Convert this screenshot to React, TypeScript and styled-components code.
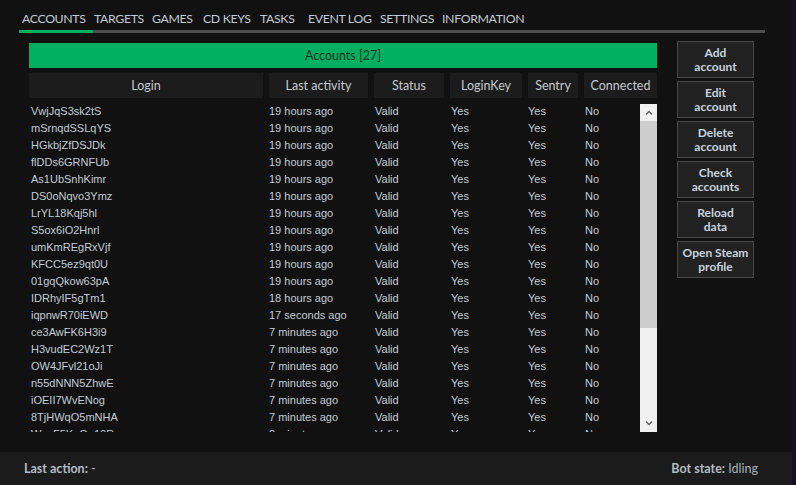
import React from "react";
import styled, { createGlobalStyle } from "styled-components";

const GlobalStyle = createGlobalStyle`
  html, body { margin: 0; padding: 0; background: #111111; }
  body { width: 796px; height: 485px; overflow: hidden; }
`;

const UI = `"Lato", "Open Sans", "Noto Sans", sans-serif`;
const DATA = `"Liberation Sans", Arial, sans-serif`;

const Screen = styled.div`
  display: flex;
  width: 796px;
  height: 485px;
`;

const Window = styled.div`
  width: 792px;
  display: flex;
  flex-direction: column;
  background: #111111;
`;

const Edge = styled.div`
  width: 4px;
  background: #1c0b2c;
`;

const TabBar = styled.div`
  display: flex;
  margin-left: 19px;
  width: 746px;
  height: 30px;
  border-bottom: 3px solid #4e4e4e;
`;

const Tab = styled.div<{ $active?: boolean; $w?: number }>`
  position: relative;
  width: ${(p) => (p.$w ? `${p.$w}px` : "auto")};
  box-sizing: border-box;
  padding: 7px 0 0 3px;
  line-height: 23px;
  font-family: ${UI};
  font-size: 12.3px;
  letter-spacing: -0.35px;
  color: #c4cad1;
  white-space: nowrap;
  &::after {
    content: "";
    display: ${(p) => (p.$active ? "block" : "none")};
    position: absolute;
    left: 0;
    right: -2px;
    bottom: -3px;
    height: 3px;
    background: #00b060;
  }
`;

const Body = styled.div`
  flex: 1;
  display: flex;
  padding: 8px 0 0 29px;
  gap: 20px;
  min-height: 0;
`;

const TablePanel = styled.div`
  width: 628px;
  display: flex;
  flex-direction: column;
  padding-top: 2px;
`;

const TitleBar = styled.div`
  height: 25px;
  background: #00b060;
  color: #1a3324;
  font-family: ${UI};
  font-size: 12.5px;
  line-height: 25px;
  text-align: center;
`;

const COLS = "234px 99px 70px 72px 50px 73px";

const HeaderRow = styled.div`
  display: grid;
  grid-template-columns: ${COLS};
  column-gap: 6px;
  margin-top: 5px;
  height: 25px;
`;

const HeaderCell = styled.div`
  background: #1c1c1c;
  color: #c6c9cc;
  font-family: ${UI};
  font-size: 12.5px;
  line-height: 25px;
  text-align: center;
  white-space: nowrap;
`;

const List = styled.div`
  margin-top: 5px;
  height: 329px;
  display: flex;
`;

const Rows = styled.div`
  flex: 1;
  overflow: hidden;
`;

const Row = styled.div`
  display: grid;
  grid-template-columns: 240px 105px 76px 78px 56px 1fr;
  height: 17px;
  line-height: 17px;
  font-family: ${DATA};
  font-size: 11px;
  color: #c5ccd5;
  white-space: nowrap;
`;

const Cell = styled.div<{ $pad?: number }>`
  padding-left: ${(p) => p.$pad ?? 1}px;
`;

const Scrollbar = styled.div`
  width: 17px;
  margin-top: 1px;
  background: #f0f0f0;
  display: flex;
  flex-direction: column;
`;

const ArrowBox = styled.div`
  height: 17px;
  display: flex;
  align-items: center;
  justify-content: center;
  background: #f0f0f0;
`;

const Thumb = styled.div`
  height: 207px;
  background: #cdcdcd;
`;

const Track = styled.div`
  flex: 1;
`;

const Buttons = styled.div`
  width: 77px;
  display: flex;
  flex-direction: column;
  gap: 3px;
`;

const ActionButton = styled.div`
  height: 37px;
  box-sizing: border-box;
  border: 1px solid #474747;
  background: #222222;
  color: #c8d3de;
  font-family: ${UI};
  font-weight: 700;
  font-size: 12px;
  display: flex;
  flex-direction: column;
  align-items: center;
  justify-content: center;
  text-align: center;
`;

const ButtonLine = styled.span`
  display: block;
  height: 14px;
  line-height: 14px;
  white-space: nowrap;
`;

const StatusBar = styled.div`
  height: 33px;
  background: #1b1b1b;
  display: flex;
  align-items: center;
  justify-content: space-between;
  padding: 0 34px 0 24px;
  font-family: ${UI};
  font-size: 12.5px;
  color: #b5bcc3;
`;

const Label = styled.span`
  font-weight: 700;
`;

const Value = styled.span`
  color: #a9b1b9;
`;

const Chevron = ({ up }: { up?: boolean }) => (
  <svg width="8" height="5" viewBox="0 0 8 5">
    <polyline
      points={up ? "1,4.5 4,1.5 7,4.5" : "1,0.5 4,3.5 7,0.5"}
      fill="none"
      stroke="#606060"
      strokeWidth="1.4"
    />
  </svg>
);

const tabs = [
  { t: "ACCOUNTS", w: 72 },
  { t: "TARGETS", w: 58 },
  { t: "GAMES", w: 51 },
  { t: "CD KEYS", w: 57 },
  { t: "TASKS", w: 48 },
  { t: "EVENT LOG", w: 72 },
  { t: "SETTINGS", w: 62 },
  { t: "INFORMATION" },
];

const accounts: [string, string][] = [
  ["VwjJqS3sk2tS", "19 hours ago"],
  ["mSrnqdSSLqYS", "19 hours ago"],
  ["HGkbjZfDSJDk", "19 hours ago"],
  ["flDDs6GRNFUb", "19 hours ago"],
  ["As1UbSnhKimr", "19 hours ago"],
  ["DS0oNqvo3Ymz", "19 hours ago"],
  ["LrYL18Kqj5hl", "19 hours ago"],
  ["S5ox6iO2Hnrl", "19 hours ago"],
  ["umKmREgRxVjf", "19 hours ago"],
  ["KFCC5ez9qt0U", "19 hours ago"],
  ["01gqQkow63pA", "19 hours ago"],
  ["IDRhyIF5gTm1", "18 hours ago"],
  ["iqpnwR70iEWD", "17 seconds ago"],
  ["ce3AwFK6H3i9", "7 minutes ago"],
  ["H3vudEC2Wz1T", "7 minutes ago"],
  ["OW4JFvl21oJi", "7 minutes ago"],
  ["n55dNNN5ZhwE", "7 minutes ago"],
  ["iOEII7WvENog", "7 minutes ago"],
  ["8TjHWqO5mNHA", "7 minutes ago"],
  ["WzoF5KuGo10R", "8 minutes ago"],
];

const buttons = [
  ["Add", "account"],
  ["Edit", "account"],
  ["Delete", "account"],
  ["Check", "accounts"],
  ["Reload", "data"],
  ["Open Steam", "profile"],
];

export default function App() {
  return (
    <>
      <GlobalStyle />
      <Screen>
        <Window>
          <TabBar>
            {tabs.map((tab, i) => (
              <Tab key={tab.t} $active={i === 0} $w={tab.w}>
                {tab.t}
              </Tab>
            ))}
          </TabBar>
          <Body>
            <TablePanel>
              <TitleBar>Accounts [27]</TitleBar>
              <HeaderRow>
                {["Login", "Last activity", "Status", "LoginKey", "Sentry", "Connected"].map((h) => (
                  <HeaderCell key={h}>{h}</HeaderCell>
                ))}
              </HeaderRow>
              <List>
                <Rows>
                  {accounts.map(([login, last]) => (
                    <Row key={login}>
                      <Cell $pad={2}>{login}</Cell>
                      <Cell $pad={0}>{last}</Cell>
                      <Cell>Valid</Cell>
                      <Cell>Yes</Cell>
                      <Cell $pad={0}>Yes</Cell>
                      <Cell>No</Cell>
                    </Row>
                  ))}
                </Rows>
                <Scrollbar>
                  <ArrowBox>
                    <Chevron up />
                  </ArrowBox>
                  <Thumb />
                  <Track />
                  <ArrowBox>
                    <Chevron />
                  </ArrowBox>
                </Scrollbar>
              </List>
            </TablePanel>
            <Buttons>
              {buttons.map(([a, b]) => (
                <ActionButton key={a}>
                  <ButtonLine>{a}</ButtonLine>
                  <ButtonLine>{b}</ButtonLine>
                </ActionButton>
              ))}
            </Buttons>
          </Body>
          <StatusBar>
            <span>
              <Label>Last action:</Label> -
            </span>
            <span>
              <Label>Bot state:</Label> <Value>Idling</Value>
            </span>
          </StatusBar>
        </Window>
        <Edge />
      </Screen>
    </>
  );
}
